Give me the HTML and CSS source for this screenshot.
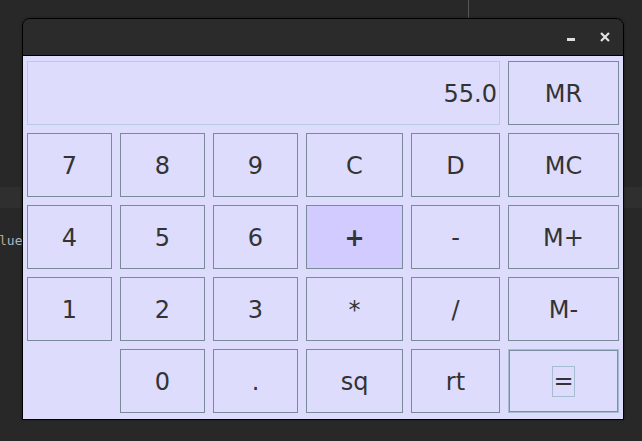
FILE: index.html
```html
<!DOCTYPE html>
<html>
<head>
<meta charset="utf-8">
<link rel="stylesheet" href="styles.css">
</head>
<body>
<div class="desktop">
  <div class="editor-band"></div>
  <div class="editor-text"><span class="kw">l</span>ue<span class="punct">;</span></div>
  <div class="split-line"></div>
  <div class="window">
    <div class="titlebar">
      <svg class="tb-icon" width="10" height="10" viewBox="0 0 10 10"><rect x="1" y="6" width="8" height="3" fill="#dedede"/></svg>
      <svg class="tb-icon" width="10" height="10" viewBox="0 0 10 10"><path d="M1.8 1.8 L8.2 8.2 M8.2 1.8 L1.8 8.2" stroke="#e2e2e2" stroke-width="2.2" stroke-linecap="square" fill="none"/></svg>
    </div>
    <div class="calc">
      <div class="display">55.0</div>
      <button class="key">MR</button>
      <button class="key">7</button>
      <button class="key">8</button>
      <button class="key">9</button>
      <button class="key">C</button>
      <button class="key">D</button>
      <button class="key">MC</button>
      <button class="key">4</button>
      <button class="key">5</button>
      <button class="key">6</button>
      <button class="key key-active">+</button>
      <button class="key">-</button>
      <button class="key">M+</button>
      <button class="key">1</button>
      <button class="key">2</button>
      <button class="key">3</button>
      <button class="key">*</button>
      <button class="key">/</button>
      <button class="key">M-</button>
      <div class="blank"></div>
      <button class="key">0</button>
      <button class="key">.</button>
      <button class="key">sq</button>
      <button class="key">rt</button>
      <button class="key key-focus"><span class="focus-ring">=</span></button>
    </div>
  </div>
</div>
</body>
</html>
```
FILE: styles.css
```css
html, body {
  margin: 0;
  padding: 0;
}

body {
  width: 642px;
  height: 441px;
  overflow: hidden;
  background: #282828;
  font-family: "DejaVu Sans", "Liberation Sans", sans-serif;
}

.desktop {
  position: relative;
  width: 642px;
  height: 441px;
  background: #282828;
}

.editor-band {
  position: absolute;
  left: 0;
  top: 187px;
  width: 642px;
  height: 21px;
  background: #2f2f2f;
}

.editor-text {
  position: absolute;
  left: -1px;
  top: 232px;
  font-family: "DejaVu Sans Mono", "Liberation Mono", monospace;
  font-size: 13px;
  line-height: 18px;
  color: #a9b7c6;
}

.editor-text .kw {
  color: #c8a27c;
}

.editor-text .punct {
  color: #7f9fc0;
}

.split-line {
  position: absolute;
  left: 468px;
  top: 0;
  width: 1px;
  height: 18px;
  background: #555555;
}

.window {
  position: absolute;
  left: 22px;
  top: 18px;
  width: 600px;
  border: 1px solid #000000;
  border-radius: 8px 8px 0 0;
  overflow: hidden;
  box-shadow: 0 0 3px rgba(0, 0, 0, 0.35);
}

.titlebar {
  background: #2b2b2b;
  border-bottom: 1px solid #000000;
  display: flex;
  justify-content: flex-end;
  align-items: flex-start;
  gap: 24px;
  padding: 13px 13px 0 0;
  box-sizing: border-box;
  height: 37px;
}

.tb-icon {
  display: block;
}

.calc {
  background: #dddcfc;
  padding: 5px 4px 6px 4px;
  display: grid;
  grid-template-columns: 85px 85px 85px 97px 89px 111px;
  grid-template-rows: repeat(5, 64px);
  gap: 8px;
}

.display {
  grid-column: 1 / 6;
  border: 1px solid #b7cbe3;
  display: flex;
  align-items: center;
  justify-content: flex-end;
  padding-right: 2px;
  padding-top: 1px;
  font-size: 24px;
  color: #333333;
}

.key {
  margin: 0;
  padding: 1px 0 0 0;
  border: 1px solid #7a8a99;
  background: #dddcfc;
  color: #333333;
  font-family: "DejaVu Sans", "Liberation Sans", sans-serif;
  font-size: 24px;
  display: flex;
  align-items: center;
  justify-content: center;
  box-sizing: border-box;
}

.key-active {
  background: #d2cbff;
  font-weight: bold;
}

.key-focus {
  border: 1px solid #a6bccf;
  box-shadow: inset 0 0 0 1px #7c919f;
  padding-top: 0;
}

.focus-ring {
  display: inline-block;
  width: 21px;
  height: 29px;
  line-height: 29px;
  text-align: center;
  border: 1px solid #a6bccf;
}
```
